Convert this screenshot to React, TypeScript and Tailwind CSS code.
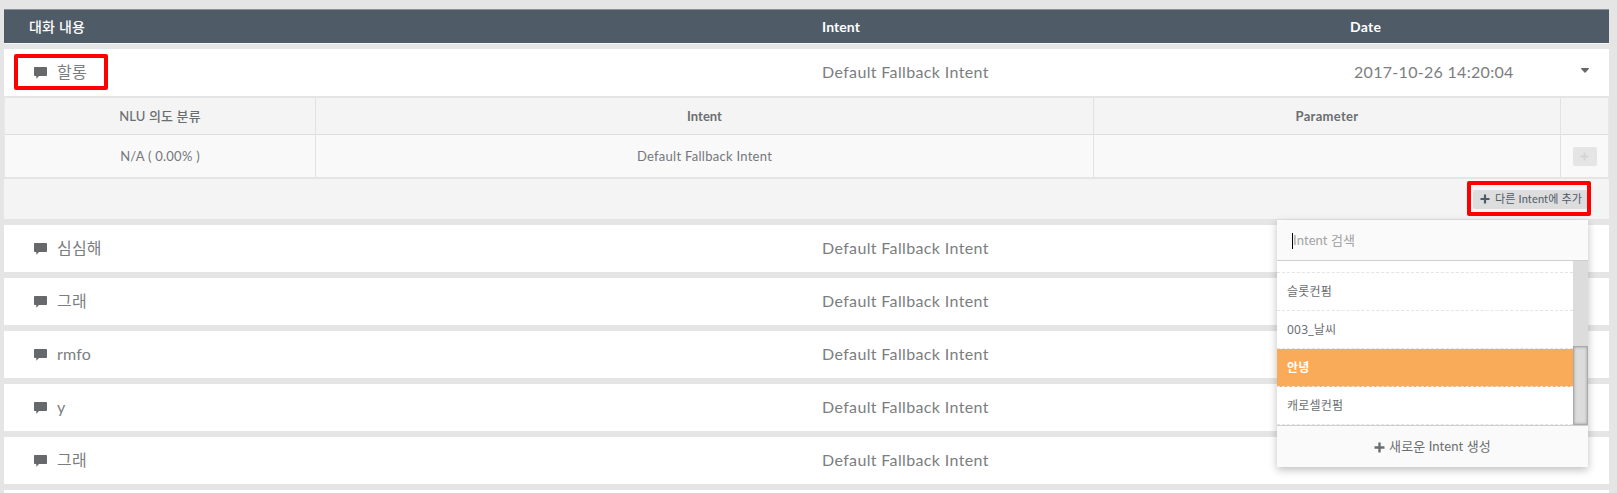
const messages = ['심심해', '그래', 'rmfo', 'y', '그래'];

function Bubble() {
  return (
    <svg className="mt-0.5 h-3 w-[13px] shrink-0 text-[#65696c]" viewBox="0 0 13 12" fill="currentColor">
      <path d="M.8 0h11.4a.8.8 0 0 1 .8.8v7.4a.8.8 0 0 1-.8.8H5L2.3 11.7V9H.8a.8.8 0 0 1-.8-.8V.8A.8.8 0 0 1 .8 0Z" />
    </svg>
  );
}

function Plus({ className }: { className: string }) {
  return (
    <svg className={className} viewBox="0 0 10 10" fill="currentColor">
      <path d="M3.9.5h2.2v3.4h3.4v2.2H6.1v3.4H3.9V6.1H.5V3.9h3.4Z" />
    </svg>
  );
}

function Row({ text, date }: { text: string; date?: string }) {
  return (
    <div className="flex h-[47px] shrink-0 items-center bg-white pb-0.5 text-base text-[#7b7e80]">
      <div className="flex w-[818px] items-center gap-2.5 pl-[30px]">
        <Bubble />
        <span className="tracking-[0.2px]">{text}</span>
      </div>
      <div className="w-[532px] tracking-[0.36px]">Default Fallback Intent</div>
      {date && (
        <>
          <div className="w-[227px] tracking-[0.3px]">{date}</div>
          <svg className="-mt-0.5 h-[5px] w-2 text-[#65696c]" viewBox="0 0 8 5" fill="currentColor">
            <path d="M.5 0h7q.8.2.3.9L4.5 4.6q-.5.5-1 0L.2.9Q-.3.2.5 0Z" />
          </svg>
        </>
      )}
    </div>
  );
}

function Option({ text, active }: { text: string; active?: boolean }) {
  return (
    <div
      className={
        active
          ? 'flex h-[38px] shrink-0 items-center border-b border-dashed border-[#e4e4e4] bg-[#f9ab59] pt-px pl-[10px] font-bold text-white'
          : 'flex h-[38px] shrink-0 items-center border-b border-dashed border-[#e4e4e4] bg-white pt-px pl-[10px]'
      }
    >
      {text}
    </div>
  );
}

function IntentMenu() {
  return (
    <div className="absolute top-[220px] left-[1277px] h-[247px] w-[311px] bg-[#fafafa] text-[12px] text-[#6b6e70] shadow-[0_3px_8px_rgba(0,0,0,0.25)]">
      <div className="flex h-[41px] items-center border-b border-[#cfcfcf] pt-0.5 pl-[15px] text-[13px] text-[#a3a3a3]">
        <span className="h-4 w-px bg-black" />
        <span className="tracking-[0.1px]">Intent 검색</span>
      </div>
      <div className="flex h-[164px]">
        <div className="flex flex-1 flex-col bg-white font-['Noto_Sans','Noto_Sans_CJK_KR',sans-serif] tracking-[0.2px]">
          <div className="h-3 border-b border-dashed border-[#e4e4e4]" />
          <Option text="슬롯컨펌" />
          <Option text="003_날씨" />
          <Option text="안녕" active />
          <Option text="캐로셀컨펌" />
        </div>
        <div className="flex w-[15px] flex-col justify-end bg-[#dcdcdc]">
          <div className="h-[79px] border border-[#aaaaaa] bg-[#dcdcdc] shadow-[inset_0_0_3px_#999999]" />
        </div>
      </div>
      <div className="flex h-[42px] items-center justify-center gap-1 border-t border-[#cfcfcf] pt-px text-[13px] tracking-[0.1px]">
        <Plus className="h-[11px] w-[11px]" />
        <span>새로운 Intent 생성</span>
      </div>
    </div>
  );
}

export default function App() {
  return (
    <div className="relative h-[493px] w-[1617px] overflow-hidden bg-[#e5e5e5] pt-[9px] pr-2 pl-1 font-['Lato','Noto_Sans_CJK_KR',sans-serif]">
      <div className="flex h-[35px] items-center border-t border-b border-t-[#87929a] border-b-[#f7f7f7] bg-[#4f5b67] pb-px text-[14px] font-bold text-white">
        <div className="w-[818px] pl-[25px] font-medium tracking-[0.2px]">대화 내용</div>
        <div className="w-[528px] tracking-[0.1px]">Intent</div>
        <div className="tracking-[0.3px]">Date</div>
      </div>
      <div className="mt-[5px] flex flex-col gap-1.5">
        <div>
          <Row text="할롱" date="2017-10-26 14:20:04" />
          <div className="mt-0.5 border-x border-[#e8e8e8] text-center text-[13px] text-[#747779]">
            <div className="grid h-[37px] grid-cols-[311px_778px_467px_1fr] border-b border-[#dddddd] bg-[#f4f4f4] leading-[37px] font-bold text-[#6b6e70]">
              <div className="border-r border-[#e2e2e2] font-medium tracking-[0.15px]">NLU 의도 분류</div>
              <div className="border-r border-[#e2e2e2]">Intent</div>
              <div className="border-r border-[#e2e2e2] tracking-[0.3px]">Parameter</div>
              <div />
            </div>
            <div className="grid h-[42px] grid-cols-[311px_778px_467px_1fr] bg-[#f9f9f9] leading-[42px]">
              <div className="border-r border-[#e2e2e2] tracking-[0.25px]">N/A ( 0.00% )</div>
              <div className="border-r border-[#e2e2e2] tracking-[0.28px]">Default Fallback Intent</div>
              <div className="border-r border-[#e2e2e2]" />
              <div className="flex items-center justify-center">
                <div className="flex h-[19px] w-6 items-center justify-center rounded-xs bg-[#e5e5e5] text-[#d5d5d5]">
                  <Plus className="h-[9px] w-[9px]" />
                </div>
              </div>
            </div>
          </div>
          <div className="mt-0.5 flex h-10 items-center justify-end bg-[#f4f4f4] pr-[22px]">
            <div className="flex h-[19px] w-[114px] items-center gap-[5px] rounded-xs bg-[#dddddd] pl-[7px] text-[11px] tracking-[0.15px] whitespace-nowrap text-[#4f5b67]">
              <Plus className="h-[10px] w-[10px]" />
              <span>다른 Intent에 추가</span>
            </div>
          </div>
        </div>
        {messages.map((text, i) => (
          <Row key={i} text={text} />
        ))}
        <div className="h-[47px] bg-white" />
      </div>
      <IntentMenu />
      <div className="absolute top-[54px] left-[14px] h-9 w-[94px] rounded-xs border-4 border-[#ff0000]" />
      <div className="absolute top-[181px] left-[1467px] h-[35px] w-[124px] rounded-xs border-4 border-[#ff0000]" />
    </div>
  );
}
